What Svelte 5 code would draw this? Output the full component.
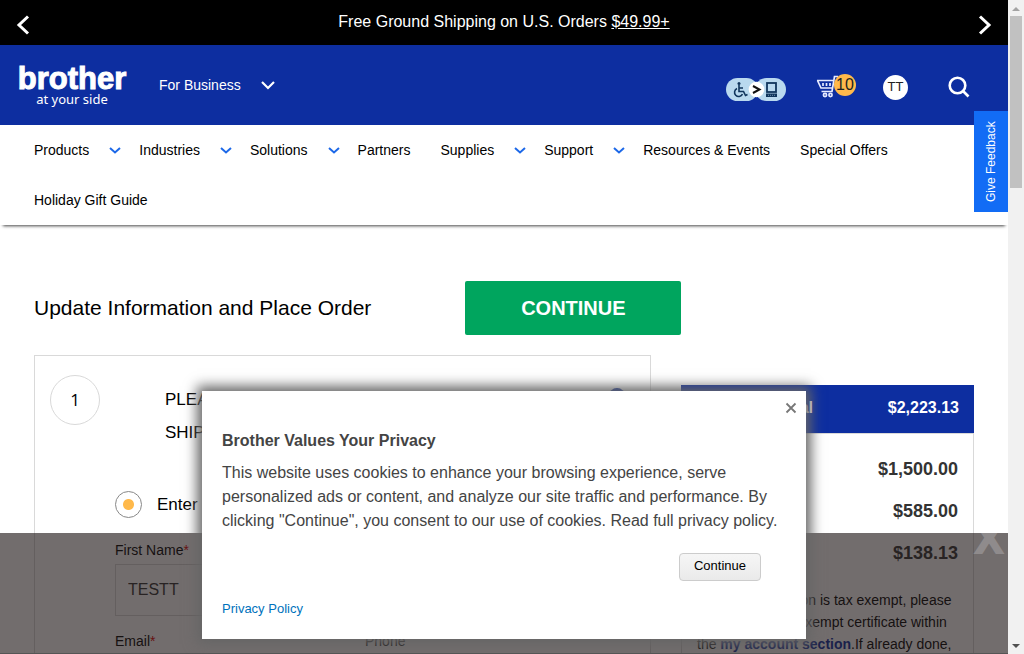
<script lang="ts">
  const menu = [
    { label: 'Products', sub: true },
    { label: 'Industries', sub: true },
    { label: 'Solutions', sub: true },
    { label: 'Partners', sub: false },
    { label: 'Supplies', sub: true },
    { label: 'Support', sub: true },
    { label: 'Resources & Events', sub: false },
    { label: 'Special Offers', sub: false },
    { label: 'Holiday Gift Guide', sub: false }
  ];
  const amounts = [
    { label: 'Subtotal', value: '$1,500.00' },
    { label: 'Shipping', value: '$585.00' },
    { label: 'Tax', value: '$138.13' }
  ];
  let firstName = $state('TESTT');
  let address = $state('enter');
</script>

<div class="window">
  <div class="page">
    <div class="promo">
      <button class="bare" aria-label="Previous offer">
        <svg width="14" height="20" viewBox="0 0 14 20"><path d="M12 1.500 3 10l9 8.500" fill="none" stroke="#fff" stroke-width="3" /></svg>
      </button>
      <p>Free Ground Shipping on U.S. Orders <a href="#offer">$49.99+</a></p>
      <button class="bare" aria-label="Next offer">
        <svg width="14" height="20" viewBox="0 0 14 20"><path d="M2 1.500 11 10l-9 8.500" fill="none" stroke="#fff" stroke-width="3" /></svg>
      </button>
    </div>

    <header>
      <a class="logo" href="#home"><span class="brand">brother</span><span class="tag">at your side</span></a>
      <button class="bare business">For Business
        <svg width="14" height="10" viewBox="0 0 14 10"><path d="m1 2 6 6 6-6" fill="none" stroke="#fff" stroke-width="2.200" /></svg>
      </button>
      <div class="tools">
        <button class="bare access" aria-label="Accessibility">
          <svg width="62" height="24" viewBox="0 0 62 24">
            <rect x="0" y="0" width="32" height="23" rx="11.500" fill="#b9d9ef" />
            <rect x="29" y="0" width="31" height="23" rx="11.500" fill="#b9d9ef" />
            <g fill="none" stroke="#10355c" stroke-width="1.600">
              <path d="M13 7v6.500h4.500l2 4 2-1M13 10h4" />
              <path d="M11 10.500a4.200 4.200 0 1 0 5.500 5.700" />
            </g>
            <circle cx="13" cy="5.500" r="1.500" fill="#10355c" />
            <circle cx="30.500" cy="11.500" r="7.800" fill="#fff" />
            <path d="m27 8 6.500 3.500L27 15" fill="none" stroke="#111" stroke-width="2" />
            <rect x="41" y="5" width="9" height="9" fill="none" stroke="#10355c" stroke-width="1.800" />
            <path d="M40 15.500h11V19H40z" fill="#10355c" />
            <path d="M42 17.300h7" stroke="#6e91ae" stroke-width="1" stroke-dasharray="1 1" />
          </svg>
        </button>
        <button class="bare cart" aria-label="Cart, 10 items">
          <svg width="24" height="24" viewBox="0 0 24 24" fill="none" stroke="#e6eaff" stroke-width="1.700">
            <path d="M22 1.500h-3.500L16 16.500H5.500M1 5.500h16.500M1.500 5.500l3.500 7.500h11.500M7 8v3M10.500 8v3M14 8v3" />
            <circle cx="9" cy="20" r="1.600" /><circle cx="14.500" cy="20" r="1.600" />
          </svg>
          <span class="count">10</span>
        </button>
        <button class="bare avatar">TT</button>
        <button class="bare" aria-label="Search">
          <svg width="22" height="22" viewBox="0 0 22 22" fill="none" stroke="#fff" stroke-width="2.600"><circle cx="9.500" cy="9.500" r="7.800" /><path d="m15 15 5.500 5.500" /></svg>
        </button>
      </div>
    </header>

    <nav>
      {#each menu as item}
        <a href="#menu" class:sub={item.sub}>{item.label}
          {#if item.sub}
            <svg width="12" height="8" viewBox="0 0 12 8"><path d="m1 2 5 4.500L11 2" fill="none" stroke="#1c68e8" stroke-width="2" /></svg>
          {/if}
        </a>
      {/each}
    </nav>

    <main>
      <div class="title">
        <h1>Update Information and Place Order</h1>
        <button class="continue">CONTINUE</button>
      </div>
      <div class="columns">
        <section class="card">
          <span class="step">1</span>
          <div class="intro">
            <h2>PLEASE<br />SHIPPING</h2>
            <span class="help"></span>
          </div>
          <div class="form">
            <label class="choice"><input type="radio" name="address" value="enter" bind:group={address} />Enter</label>
            <div class="fields">
              <div class="field">
                <label for="first">First Name<i>*</i></label>
                <input id="first" type="text" bind:value={firstName} />
              </div>
              <div class="field">
                <label for="email">Email<i>*</i></label>
                <input id="email" type="email" />
              </div>
              <div class="field">
                <label for="phone">Phone</label>
                <input id="phone" type="tel" />
              </div>
            </div>
          </div>
        </section>
        <aside class="summary">
          <div class="total"><span>Order Total</span><span>$2,223.13</span></div>
          <div class="lines">
            <dl>
              {#each amounts as a}
                <div><dt>{a.label}</dt><dd>{a.value}</dd></div>
              {/each}
            </dl>
            <p>If your organization is tax exempt, please update your tax exempt certificate within the <a href="#account">my account section</a>.If already done,</p>
          </div>
        </aside>
      </div>
    </main>

    <div class="band"><button class="bare" aria-label="Close banner">X</button></div>
    <button class="feedback">Give Feedback</button>

    <div class="privacy" role="dialog" aria-labelledby="privacy-title">
      <button class="bare close" aria-label="Close">
        <svg width="12" height="12" viewBox="0 0 12 12"><path d="m1.500 1.500 9 9m0-9-9 9" stroke="#777" stroke-width="1.800" /></svg>
      </button>
      <h3 id="privacy-title">Brother Values Your Privacy</h3>
      <p>This website uses cookies to enhance your browsing experience, serve personalized ads or content, and analyze our site traffic and performance. By clicking "Continue", you consent to our use of cookies. Read full privacy policy.</p>
      <button class="agree">Continue</button>
      <a href="#privacy">Privacy Policy</a>
    </div>
  </div>

  <div class="scrollbar">
    <svg width="16" height="16" viewBox="0 0 16 16"><path d="M4 11h8L8 7z" fill="#a3a3a3" /></svg>
    <span class="thumb"></span>
    <svg width="16" height="16" viewBox="0 0 16 16"><path d="M4 6h8l-4 4z" fill="#505050" /></svg>
  </div>
</div>

<style>
  :global(body) { background: #fff; }
  .window {
    display: flex;
    height: 100vh;
    overflow: hidden;
    font: 14px/20px "Liberation Sans", Arial, sans-serif;
    color: #000;
  }
  .window * { box-sizing: border-box; }
  .page { position: relative; flex: 1; min-width: 0; overflow: hidden; }
  button, input { font: inherit; color: inherit; }
  .bare { display: flex; align-items: center; padding: 0; border: 0; background: none; }
  svg { display: block; flex: none; }
  h1, h2, h3, p, dl, dd { margin: 0; font-weight: normal; }
  a { color: inherit; text-decoration: none; }

  .promo {
    display: flex;
    align-items: center;
    justify-content: space-between;
    height: 45px;
    padding: 4px 16px 0;
    background: #000;
    color: #fff;
    font-size: 16px;
  }
  .promo p { padding-bottom: 6px; }
  .promo a { text-decoration: underline; }

  header {
    display: flex;
    align-items: center;
    height: 80px;
    padding: 0 38px 0 18px;
    background: #0d2ea0;
    color: #fff;
  }
  .logo { display: flex; flex-direction: column; align-items: center; width: 108px; padding-top: 1px; }
  .brand { font-size: 31px; line-height: 26px; font-weight: bold; -webkit-text-stroke: 1px #fff; }
  .tag { font: 13px/14px "Noto Sans", sans-serif; }
  .business { gap: 20px; margin-left: 33px; }
  .tools { display: flex; align-items: center; margin-left: auto; padding-top: 4px; }
  .access { margin: 5px 28px 0 0; }
  .cart { margin-right: 27px; }
  .count {
    width: 22px;
    height: 22px;
    margin: -4px 0 0 -6px;
    border-radius: 11px;
    background: #ffb94b;
    color: #222;
    font-size: 16px;
    line-height: 22px;
  }
  .avatar {
    justify-content: center;
    width: 25px;
    height: 25px;
    margin-right: 40px;
    border-radius: 50%;
    background: #fff;
    color: #222;
    font-size: 13px;
  }

  nav {
    display: flex;
    flex-wrap: wrap;
    padding: 0 34px;
    line-height: 50px;
    box-shadow: 0 4px 3px -3px #444;
  }
  nav a { display: flex; align-items: center; gap: 20px; margin-right: 30px; }
  nav .sub { margin-right: 18px; }

  main { padding: 56px 34px 0; }
  .title { display: flex; gap: 94px; align-items: center; }
  h1 { font-size: 21px; line-height: 54px; }
  .continue {
    width: 216px;
    height: 54px;
    border: 0;
    border-radius: 2px;
    background: #00a55e;
    color: #fff;
    font-size: 20px;
    font-weight: bold;
  }
  .columns {
    display: grid;
    grid-template-columns: minmax(0, 1fr) 293px;
    gap: 30px;
    padding-top: 20px;
  }
  .card {
    display: grid;
    grid-template-columns: 50px 1fr;
    align-content: start;
    padding: 19px 25px 0 15px;
    border: 1px solid #d9d9d9;
  }
  .step {
    height: 50px;
    border: 1px solid #d9d9d9;
    border-radius: 50%;
    font: 17px/48px "Open Sans", sans-serif;
    text-align: center;
  }
  .intro { display: flex; justify-content: space-between; padding: 8px 0 0 65px; }
  h2 { font-size: 17px; line-height: 33px; }
  .help { width: 16px; height: 16px; margin-top: 5px; border-radius: 50%; background: #0d2ea0; }
  .form { grid-column: 1 / -1; padding: 42px 30px 0 65px; }
  .choice { display: flex; align-items: center; gap: 15px; font-size: 17px; }
  .choice input {
    appearance: none;
    width: 27px;
    height: 27px;
    margin: 0;
    border: 1px solid #888;
    border-radius: 50%;
    background: radial-gradient(circle, #ffb94b 5px, transparent 6px);
  }
  .fields { display: grid; grid-template-columns: 1fr 1fr; gap: 15px 20px; padding-top: 22px; }
  .field:first-child { grid-column: 1 / -1; }
  .field label { display: block; line-height: 20px; padding-bottom: 4px; }
  .field i { color: #d00; font-style: normal; }
  .field input {
    width: 100%;
    height: 52px;
    padding: 0 12px;
    border: 1px solid #d9d9d9;
    background: #fff;
    color: #333;
    font-size: 16px;
  }

  .summary { margin-top: 30px; }
  .total {
    display: flex;
    justify-content: space-between;
    padding: 0 15px 2px 47px;
    background: #0d2ea0;
    color: #fff;
    font-size: 16px;
    line-height: 46px;
    font-weight: bold;
  }
  .lines { padding: 14px 15px 0; border: 1px solid #d9d9d9; }
  dl div { display: flex; justify-content: space-between; height: 42px; line-height: 42px; }
  dd { font-size: 18px; font-weight: bold; color: #333; }
  .lines p { padding-top: 15px; line-height: 22px; }
  .lines a { color: #0d2ea0; font-weight: bold; }

  .band {
    position: absolute;
    inset: auto 0 0 0;
    display: flex;
    justify-content: flex-end;
    align-items: flex-start;
    height: 121px;
    padding-right: 5px;
    overflow: hidden;
    border-bottom: 1px solid #555;
    background: rgba(34, 26, 27, 0.64);
  }
  .band button { margin-top: -14px; color: #8f8b8c; font-size: 42px; line-height: 40px; font-weight: bold; -webkit-text-stroke: 2px #8f8b8c; }
  .feedback {
    position: absolute;
    top: 111px;
    right: 0;
    width: 34px;
    height: 101px;
    padding: 0;
    border: 0;
    background: #126cf5;
    color: #fff;
    font-size: 12px;
    writing-mode: vertical-rl;
    rotate: 180deg;
  }
  .privacy {
    position: absolute;
    left: 202px;
    right: 202px;
    bottom: 15px;
    display: flex;
    flex-direction: column;
    padding: 11px 20px 20px;
    background: #fff;
    box-shadow: 0 0 12px 5px #666;
    color: #444;
    font-size: 16px;
    line-height: 24px;
  }
  .close { align-self: flex-end; margin-right: -11px; }
  h3 { padding-top: 15px; font-size: 16px; font-weight: bold; }
  .privacy p { padding-top: 8px; }
  .agree {
    align-self: flex-end;
    width: 82px;
    height: 28px;
    margin: 20px 25px 18px 0;
    padding: 0 0 3px;
    border: 1px solid #ccc;
    border-radius: 4px;
    background: linear-gradient(#f6f6f6, #eaeaea);
    color: #000;
    font-size: 13px;
  }
  .privacy a { color: #0072bc; font-size: 13px; line-height: 20px; }

  .scrollbar { display: flex; flex-direction: column; width: 16px; background: #f1f1f1; }
  .thumb { height: 172px; margin: 0 2px auto; background: #c1c1c1; }
</style>
